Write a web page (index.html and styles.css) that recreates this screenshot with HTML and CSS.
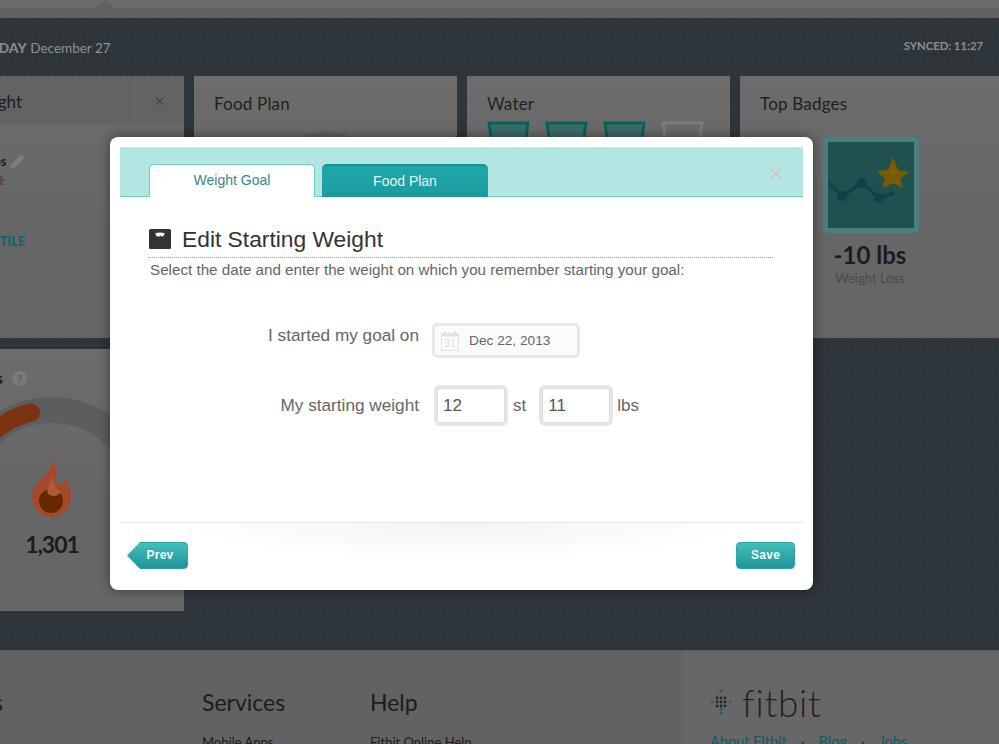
FILE: index.html
```html
<!DOCTYPE html>
<html lang="en">
<head>
    <meta charset="UTF-8">
    <meta name="viewport" content="width=device-width, initial-scale=1.0">
    <title>Fitbit Dashboard</title>
    <link rel="stylesheet" href="styles.css">
</head>
<body>
    <div class="topbar"><span class="topbar-arrow"></span></div>

    <div class="dash">
        <div class="dash-head">
            <p class="dash-date"><strong>TODAY</strong> December 27</p>
            <p class="dash-sync">SYNCED: 11:27</p>
        </div>
        <div class="cards">
            <section class="card">
                <div class="weight-head">
                    <h3>Weight</h3>
                    <span class="weight-close">×</span>
                </div>
                <div class="weight-body">
                    <p class="weight-val">12 st 11 lbs
                        <svg class="pencil" width="17" height="17" viewBox="0 0 17 17"><path d="M1 16l1.500-5L12 1.500l3.500 3.500L6 14.500z" fill="#7d7d7d"/></svg>
                    </p>
                    <p class="weight-goal">Goal:</p>
                    <p class="weight-link">CHANGE TILE</p>
                </div>
            </section>
            <section class="card">
                <h3 class="card-title">Food Plan</h3>
                <div class="food-arc"></div>
            </section>
            <section class="card">
                <h3 class="card-title">Water</h3>
                <div class="glasses">
                    <svg width="43" height="40" viewBox="0 0 43 40"><polygon points="2,2 41,2 36,38 7,38" fill="#3d6c6b" stroke="#0e5f5c" stroke-width="3"/></svg>
                    <svg width="43" height="40" viewBox="0 0 43 40"><polygon points="2,2 41,2 36,38 7,38" fill="#3d6c6b" stroke="#0e5f5c" stroke-width="3"/></svg>
                    <svg width="43" height="40" viewBox="0 0 43 40"><polygon points="2,2 41,2 36,38 7,38" fill="#3d6c6b" stroke="#0e5f5c" stroke-width="3"/></svg>
                    <svg width="43" height="40" viewBox="0 0 43 40"><polygon points="2,2 41,2 36,38 7,38" fill="#6a6a6a" stroke="#7c7c7c" stroke-width="3"/></svg>
                </div>
            </section>
            <section class="card">
                <h3 class="card-title">Top Badges</h3>
                <div class="badge">
                    <svg width="86" height="86" viewBox="0 0 86 86">
                        <rect width="86" height="86" fill="#205050"/>
                        <polyline points="0,40 14,54 34,41 51,56 66,51" fill="none" stroke="#0a4448" stroke-width="3"/>
                        <circle cx="14" cy="54" r="5" fill="#0a4448"/>
                        <circle cx="34" cy="41" r="5" fill="#0a4448"/>
                        <circle cx="51" cy="56" r="5" fill="#0a4448"/>
                        <polygon points="65,15 70,28 81,30 72,37 75,46 65,41 55,46 57,37 49,29 60,28" fill="#7a5c00"/>
                    </svg>
                </div>
                <p class="badge-val">-10 lbs</p>
                <p class="badge-name">Weight Loss</p>
            </section>
            <section class="card card-low">
                <h3 class="calories-title">Calories <span class="help">?</span></h3>
                <svg class="gauge" width="264" height="220" viewBox="0 0 264 220">
                    <path d="M43 150A89 89 0 0 1 221 150" fill="none" stroke="#5d5d5d" stroke-width="26"/>
                    <path d="M57 102A89 89 0 0 1 111 63.500" fill="none" stroke="#7a3210" stroke-width="18" stroke-linecap="round"/>
                    <path d="M132 110C136 118 138 122 136 130C136 136 143 138 145 130C149 134 151 141 151 148C151 159 142 168 132 168C121 168 112 159 112 148C112 136 122 130 127 124C131 119 133 115 132 110Z" fill="#a5492b"/>
                    <circle cx="131" cy="152" r="12" fill="#652800"/>
                    <path d="M134 126C133 134 134 140 141 142C139 148 132 148 128 145C126 140 130 133 134 126Z" fill="#ab5a3c"/>
                </svg>
                <p class="calories-val">1,301</p>
            </section>
        </div>
    </div>

    <footer class="foot">
        <div class="foot-links">
            <div class="foot-col foot-col-about">
                <h4>Products</h4>
            </div>
            <div class="foot-col foot-col-services">
                <h4>Services</h4>
                <a>Mobile Apps</a>
            </div>
            <div class="foot-col">
                <h4>Help</h4>
                <a>Fitbit Online Help</a>
            </div>
        </div>
        <div class="foot-brand">
            <div class="logo">
                <svg width="22" height="26" viewBox="0 0 22 26">
                    <g fill="#1d5f63">
                        <circle cx="11" cy="2" r="1.500"/><circle cx="11" cy="24" r="1.500"/><circle cx="11" cy="20" r="1.500"/>
                        <circle cx="2" cy="13" r="1.200"/><circle cx="20" cy="13" r="1.200"/>
                    </g>
                    <g fill="#262626">
                        <circle cx="7" cy="9" r="1.400"/><circle cx="11" cy="9" r="1.400"/><circle cx="15" cy="9" r="1.400"/>
                        <circle cx="7" cy="13" r="1.400"/><circle cx="11" cy="13" r="1.400"/><circle cx="15" cy="13" r="1.400"/>
                        <circle cx="7" cy="17" r="1.400"/><circle cx="11" cy="17" r="1.400"/><circle cx="15" cy="17" r="1.400"/>
                    </g>
                </svg>
                <span class="logo-text">fitbit</span>
            </div>
            <div class="brand-links">
                <a>About Fitbit</a><span>·</span><a>Blog</a><span>·</span><a>Jobs</a>
            </div>
        </div>
    </footer>

    <div class="modal">
        <div class="modal-tabs">
            <a class="tab tab-active">Weight Goal</a>
            <a class="tab">Food Plan</a>
            <svg class="modal-close" width="11" height="11" viewBox="0 0 11 11"><path d="M.5.500l10 10M10.500.500l-10 10" stroke="#bdb5b5" stroke-width="1" fill="none"/></svg>
        </div>
        <div class="modal-body">
            <div class="title-row">
                <svg width="22" height="20" viewBox="0 0 22 20">
                    <rect width="22" height="20" rx="1.500" fill="#333"/>
                    <path d="M6 4.500c3-1.500 7-1.500 10 0l-2 3h-1.500l-1-1-1 1H8z" fill="#fff"/>
                </svg>
                <h2>Edit Starting Weight</h2>
            </div>
            <p class="subtitle">Select the date and enter the weight on which you remember starting your goal:</p>
            <div class="form-row form-row-date">
                <label>I started my goal on</label>
                <div class="date-field">
                    <svg width="18" height="20" viewBox="0 0 18 20">
                        <rect x=".5" y="2.500" width="17" height="17" fill="#fbfbfb" stroke="#e2e2e2"/>
                        <rect x=".5" y="2.500" width="17" height="3" fill="#e2e2e2"/>
                        <rect x="3" y="0" width="2" height="4" fill="#e2e2e2"/>
                        <rect x="13" y="0" width="2" height="4" fill="#e2e2e2"/>
                        <text x="9" y="16" text-anchor="middle" class="cal-num">31</text>
                    </svg>
                    <span>Dec 22, 2013</span>
                </div>
            </div>
            <div class="form-row">
                <label>My starting weight</label>
                <span class="num-field">12</span>
                <span class="unit">st</span>
                <span class="num-field">11</span>
                <span class="unit">lbs</span>
            </div>
        </div>
        <div class="modal-foot">
            <a class="btn btn-prev">Prev</a>
            <a class="btn">Save</a>
        </div>
    </div>
</body>
</html>
```

FILE: styles.css
```css
* {
    box-sizing: border-box;
}
body {
    margin: 0;
    width: 999px;
    height: 744px;
    overflow: hidden;
    position: relative;
    background: #626262;
    font-family: 'Lato', sans-serif;
    color: #1c1c1c;
}
h2, h3, h4, p {
    margin: 0;
    font-weight: normal;
}

/* top strip */
.topbar {
    height: 18px;
    background: #616161;
    border-top: 8px solid #6b6b6b;
    position: relative;
}
.topbar-arrow {
    position: absolute;
    left: 96px;
    top: -8px;
    border-left: 9px solid transparent;
    border-right: 9px solid transparent;
    border-bottom: 8px solid #616161;
}

/* dashboard */
.dash {
    height: 632px;
    background-color: #2d343a;
    background-image: radial-gradient(#333a40 0.7px, transparent 0.8px);
    background-size: 6px 6px;
}
.dash-head {
    height: 58px;
    display: flex;
    justify-content: space-between;
    margin-left: -21px;
    padding: 21px 16px 0 0;
}
.dash-date {
    font-size: 13.5px;
    color: #8f8f8f;
}
.dash-date strong {
    font-size: 14px;
    font-weight: 900;
    color: #8a8a8a;
}
.dash-sync {
    font-size: 11.3px;
    font-weight: 700;
    color: #8f8f8f;
}
.cards {
    display: grid;
    grid-template-columns: 264px 263px 263px 263px;
    grid-template-rows: 262px 262px;
    gap: 11px 10px;
    margin-left: -80px;
}
.card {
    background: linear-gradient(#6c6c6c, #666 60%);
    position: relative;
    overflow: hidden;
}
.card-low {
    grid-column: 1;
    grid-row: 2;
}
.card-title {
    font-size: 17px;
    letter-spacing: 0.2px;
    color: #1f1f1f;
    padding: 17px 0 0 20px;
}

/* weight card */
.weight-head {
    height: 48px;
    background: #636363;
    display: flex;
    justify-content: space-between;
    align-items: center;
}
.weight-head h3 {
    font-size: 17px;
    margin: 2px 0 0 48px;
}
.weight-close {
    width: 50px;
    height: 48px;
    line-height: 48px;
    border-left: 1px solid #6d6d6d;
    text-align: center;
    font-size: 18px;
    color: #444;
}
.weight-body {
    padding: 27px 0 0 0;
}
.weight-val {
    font-size: 13px;
    font-weight: 700;
    margin-left: 20px;
    display: flex;
    align-items: center;
    gap: 2px;
    height: 20px;
}
.weight-goal {
    font-size: 11px;
    color: #333;
    margin: 3px 0 0 60px;
}
.weight-link {
    font-size: 13px;
    font-weight: 900;
    color: #0f6272;
    margin: 46px 0 0 22px;
}
.food-arc {
    position: absolute;
    left: 61px;
    top: 56px;
    width: 140px;
    height: 140px;
    border-radius: 50%;
    background: #606060;
}

/* water */
.glasses {
    display: flex;
    gap: 15px;
    padding: 7px 0 0 20px;
}

/* badge */
.badge {
    width: 96px;
    height: 96px;
    margin: 23px 0 0 83px;
    padding: 5px;
    background: #4b7f7f;
    border-radius: 4px;
}
.badge svg {
    display: block;
}
.badge-val {
    font-size: 24px;
    font-weight: 700;
    text-align: center;
    width: 260px;
    margin-top: 7px;
}
.badge-name {
    font-size: 13px;
    color: #4a4a4a;
    text-align: center;
    width: 260px;
    margin-top: 1px;
}

/* calories */
.calories-title {
    font-size: 15px;
    font-weight: 700;
    margin: 20px 0 0 29px;
    display: flex;
    align-items: center;
    gap: 9px;
}
.help {
    width: 15px;
    height: 15px;
    border-radius: 50%;
    background: #7a7a7a;
    color: #5c5c5c;
    font-size: 12px;
    line-height: 15px;
    text-align: center;
}
.gauge {
    position: absolute;
    left: 0;
    top: 0;
}
.calories-val {
    position: absolute;
    left: 0;
    top: 181px;
    width: 264px;
    text-align: center;
    font-size: 23px;
    letter-spacing: -1px;
    font-weight: 700;
}

/* footer */
.foot {
    height: 94px;
    border-top: 1px solid #5a5a5a;
    display: flex;
    background: #626262;
    overflow: hidden;
}
.foot-links {
    width: 683px;
    display: flex;
    padding-top: 37px;
}
.foot-col {
    display: flex;
    flex-direction: column;
    gap: 18px;
}
.foot-col-about {
    width: 202px;
    align-items: flex-end;
}
.foot-col-about h4 {
    margin-right: 199px;
}
.foot-col-services {
    width: 168px;
}
.foot-col h4 {
    font-size: 23px;
    color: #1c1c1c;
}
.foot-col a {
    font-size: 13px;
    color: #1c1c1c;
}
.foot-brand {
    flex: 1;
    background: #676767;
    padding: 34px 0 0 27px;
}
.logo {
    display: flex;
    align-items: center;
    gap: 10px;
    height: 34px;
}
.logo-text {
    font-size: 37px;
    font-weight: 300;
    color: #222;
    letter-spacing: 0.8px;
}
.brand-links {
    display: flex;
    gap: 14px;
    font-size: 14.5px;
    color: #0d5c66;
    margin-top: 14px;
}
.brand-links span {
    color: #333;
}

/* modal */
.modal {
    position: absolute;
    left: 110px;
    top: 137px;
    width: 703px;
    height: 453px;
    background: #fff;
    border-radius: 8px;
    padding: 10px;
    box-shadow: 0 0 12px rgba(0, 0, 0, 0.45);
    display: flex;
    flex-direction: column;
    font-family: 'Liberation Sans', Arial, sans-serif;
    color: #666;
}
.modal-tabs {
    height: 50px;
    flex: none;
    background: #b3e5e3;
    border-top: 1px solid #c3eae8;
    border-bottom: 1px solid #70cfcd;
    display: flex;
    align-items: flex-end;
    gap: 7px;
    padding-left: 29px;
    position: relative;
}
.tab {
    width: 166px;
    height: 33px;
    margin-bottom: -1px;
    border-radius: 5px 5px 0 0;
    background: linear-gradient(#20a8a9, #1c9b9d);
    border-top: 2px solid #1a9293;
    color: #e4f5f4;
    font-size: 14px;
    line-height: 30px;
    text-align: center;
}
.tab-active {
    background: #fff;
    border: 1px solid #70cfcd;
    border-bottom: none;
    color: #33898a;
}
.modal-close {
    position: absolute;
    left: 650px;
    top: 20px;
}
.modal-body {
    padding: 32px 30px 0 28px;
    flex: 1;
}
.title-row {
    display: flex;
    align-items: center;
    gap: 11px;
    height: 20px;
    padding-bottom: 8px;
    box-sizing: content-box;
    border-bottom: 1px dotted #999;
}
.title-row svg {
    margin-left: 1px;
}
.title-row h2 {
    font-size: 22.8px;
    color: #333;
}
.subtitle {
    font-size: 15.2px;
    margin: 3px 0 0 2px;
    line-height: 18px;
}
.form-row {
    display: flex;
    align-items: center;
    margin: 27px 0 0 -28px;
}
.form-row-date {
    margin-top: 44px;
}
.form-row label {
    width: 299px;
    text-align: right;
    font-size: 17.2px;
    margin-right: 15px;
}
.form-row-date label {
    margin-right: 13px;
    padding-bottom: 10px;
}
.date-field {
    width: 148px;
    height: 35px;
    border: 3px solid #e9e9e9;
    border-radius: 5px;
    background: #fbfbfb;
    display: flex;
    align-items: center;
    gap: 10px;
    padding-left: 6px;
    font-size: 13.7px;
    color: #666;
}
.cal-num {
    font-family: 'Liberation Sans', Arial, sans-serif;
    font-size: 10px;
    fill: #dedede;
}
.num-field {
    width: 74px;
    height: 41px;
    border: 3px solid #e6e6e6;
    border-radius: 6px;
    box-shadow: inset 0 0 0 1px #dcdcdc;
    font-size: 17px;
    line-height: 35px;
    padding-left: 6px;
    color: #555;
}
.unit {
    font-size: 17px;
    margin: 0 13px 0 5px;
}
.unit:last-child {
    margin-left: 4px;
}
.modal-foot {
    height: 58px;
    flex: none;
    border-top: 1px solid #e8e8e8;
    background: radial-gradient(ellipse 42% 36px at center top, #f3f3f3, #fff);
    display: flex;
    justify-content: space-between;
    padding: 19px 8px 0 7px;
}
.btn {
    width: 59px;
    height: 27px;
    border-radius: 4px;
    background: linear-gradient(#43bebc, #1e9597);
    border: 1px solid #2aa3a4;
    color: #f2fbfb;
    font-size: 12px;
    font-weight: 700;
    letter-spacing: 0.3px;
    line-height: 25px;
    text-align: center;
}
.btn-prev {
    width: 61px;
    padding-left: 5px;
    clip-path: polygon(0 50%, 13px 0, 100% 0, 100% 100%, 13px 100%);
}
```
